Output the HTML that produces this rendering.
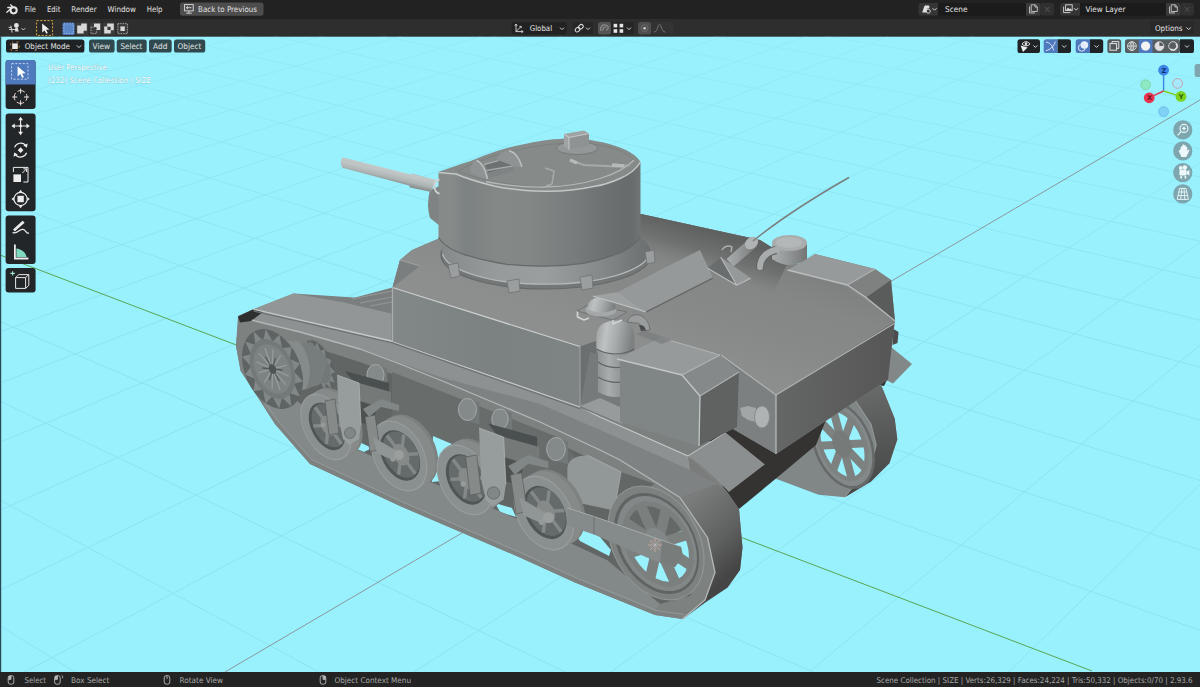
<!DOCTYPE html>
<html><head><meta charset="utf-8"><title>Blender</title>
<style>
html,body{margin:0;padding:0;background:#232323;overflow:hidden}
svg{display:block}
text{font-family:"DejaVu Sans","Liberation Sans",sans-serif;font-size:7.9px;fill:#e2e2e2}
</style></head><body>
<svg width="1200" height="687" viewBox="0 0 1200 687">
<defs><linearGradient id="gFade" x1="0" y1="36" x2="0" y2="296" gradientUnits="userSpaceOnUse"><stop offset="0" stop-color="#99f1fe" stop-opacity="0.55"/><stop offset="1" stop-color="#99f1fe" stop-opacity="0"/></linearGradient><clipPath id="vp"><rect x="0" y="36.5" width="1200" height="635.5"/></clipPath></defs>
<rect x="0" y="0" width="1200" height="687" fill="#232323"/>
<g clip-path="url(#vp)">
<rect x="0" y="36" width="1200" height="637" fill="#99f1fe"/>
<path d="M-12092.6 17930.6 L-1910.5 61.6 M-6956.8 14417.3 L-1810.1 48.7 M-4114.1 16602.4 L-1714.6 36.5 M-676.3 13513.8 L-1623.6 24.8 M2890.3 15436.4 L-1536.7 13.6 M4967.2 12701.9 L-1453.7 2.9 M9088.8 14404.6 L-1374.4 -7.3 M14493.3 16637.3 L-1298.5 -17.0 M10772.1 10208.6 L-1225.8 -26.4 M7507.5 6161.1 L-1156.0 -35.4 M6038.3 4339.7 L-1089.1 -44.0 M5202.9 3304.0 L-1024.8 -52.2 M4664.0 2635.8 L-963.0 -60.2 M4287.4 2168.9 L-903.5 -67.8 M3795.9 1559.6 L-791.2 -82.3 M3626.7 1349.8 L-738.0 -89.1 M3489.3 1179.4 L-686.7 -95.7 M3375.5 1038.3 L-637.2 -102.0 M3279.7 919.6 L-589.4 -108.2 M3198.0 818.2 L-543.2 -114.1 M3127.4 730.7 L-498.6 -119.9 M3065.9 654.4 L-455.3 -125.4 M3011.7 587.3 L-413.5 -130.8 M2963.7 527.8 L-373.0 -136.0 M2920.9 474.7 L-333.7 -141.1 M2882.4 426.9 L-295.6 -146.0 M2847.6 383.9 L-258.7 -150.7 M2816.1 344.7 L-222.8 -155.3 M2787.3 309.1 L-188.0 -159.8 M2761.0 276.5 L-154.2 -164.1 M2736.8 246.5 L-121.4 -168.4 M2714.5 218.8 L-89.4 -172.5 M2693.9 193.2 L-58.4 -176.5 M2674.7 169.5 L-28.2 -180.3 M2656.9 147.5 L1.2 -184.1 M2640.3 126.9 L29.8 -187.8 M2624.8 107.7 L57.7 -191.4 M2610.3 89.6 L84.8 -194.9 M2596.7 72.7 L111.3 -198.3 M2583.8 56.8 L137.1 -201.6 M2571.7 41.8 L162.2 -204.8 M2560.3 27.7 L186.8 -208.0 M2549.5 14.3 L210.7 -211.1 M2539.3 1.6 L234.1 -214.1 M2529.6 -10.4 L256.9 -217.0 M2520.4 -21.8 L279.2 -219.9 M2511.7 -32.6 L301.0 -222.7 M2503.4 -42.9 L322.3 -225.4 M2495.4 -52.8 L343.1 -228.1 M2487.9 -62.2 L363.4 -230.7 M2480.6 -71.1 L383.3 -233.2 M2473.7 -79.7 L402.7 -235.8 M2467.1 -87.9 L421.7 -238.2 M12592.8 12465.8 L2460.8 -95.8 M10533.2 13072.7 L2388.5 -100.9 M8287.2 13734.5 L2318.8 -105.9 M5828.3 14459.1 L2251.4 -110.8 M3124.7 15255.8 L2186.3 -115.4 M138.0 16135.9 L2123.3 -120.0 M-3178.8 17113.2 L2062.3 -124.3 M-3975.8 12206.2 L2003.3 -128.6 M-6627.0 12774.9 L1946.1 -132.7 M-9506.8 13392.6 L1890.7 -136.6 M-6398.4 7937.6 L1837.0 -140.5 M-5052.8 5576.1 L1784.8 -144.2 M-4301.7 4258.0 L1734.2 -147.8 M-3822.4 3416.9 L1685.1 -151.4 M-3245.9 2405.2 L1591.0 -158.1 M-3059.0 2077.3 L1545.9 -161.3 M-2911.4 1818.2 L1502.1 -164.5 M-2791.8 1608.4 L1459.4 -167.5 M-2693.0 1435.0 L1417.9 -170.5 M-2610.0 1289.2 L1377.5 -173.4 M-2539.2 1165.0 L1338.1 -176.2 M-2478.2 1057.9 L1299.7 -179.0 M-2425.0 964.6 L1262.3 -181.7 M-2378.3 882.6 L1225.8 -184.3 M-2336.9 810.0 L1190.3 -186.8 M-2300.0 745.2 L1155.6 -189.3 M-2266.8 687.0 L1121.7 -191.7 M-2236.9 634.5 L1088.7 -194.1 M-2209.8 586.9 L1056.4 -196.4 M-2185.0 543.5 L1024.9 -198.7 M-2162.4 503.8 L994.1 -200.9 M-2141.6 467.3 L964.0 -203.1 M-2122.5 433.7 L934.6 -205.2 M-2104.8 402.6 L905.8 -207.2 M-2088.4 373.8 L877.7 -209.2 M-2073.1 347.0 L850.1 -211.2 M-2058.8 322.0 L823.2 -213.1 M-2045.5 298.7 L796.9 -215.0 M-2033.1 276.8 L771.1 -216.9 M-2021.4 256.3 L745.8 -218.7 M-2010.4 237.0 L721.1 -220.5 M-2000.0 218.8 L696.8 -222.2 M-1990.3 201.7 L673.1 -223.9 M-1981.0 185.5 L649.8 -225.6 M-1972.3 170.1 L627.0 -227.2 M-1964.0 155.6 L604.6 -228.8 M-1956.1 141.7 L582.7 -230.4 M-1948.6 128.6 L561.2 -231.9 M-1941.5 116.1 L540.1 -233.4 M-1934.7 104.2 L519.4 -234.9 M-1928.2 92.8 L499.1 -236.4 M-1922.0 82.0 L479.1 -237.8 M-1916.1 71.6 L459.6 -239.2" stroke="#8be4f2" stroke-width="1" fill="none"/>
<rect x="0" y="36" width="1200" height="260" fill="url(#gFade)"/>
<path d="M0 255 L1092 671" stroke="#58a552" stroke-width="1" fill="none"/>
<path d="M1200 100 L225 672" stroke="#8a9296" stroke-width="0.95" fill="none"/>
<defs>
<linearGradient id="gTur" x1="438" y1="0" x2="641" y2="0" gradientUnits="userSpaceOnUse">
<stop offset="0" stop-color="#858a89"/><stop offset="0.06" stop-color="#878c8b"/><stop offset="0.14" stop-color="#7c8281"/><stop offset="0.3" stop-color="#848988"/><stop offset="0.45" stop-color="#838786"/><stop offset="0.65" stop-color="#7a7d7d"/><stop offset="0.85" stop-color="#6c6f6f"/><stop offset="0.95" stop-color="#686b6b"/><stop offset="1" stop-color="#727575"/></linearGradient>
<linearGradient id="gRing" x1="442" y1="0" x2="650" y2="0" gradientUnits="userSpaceOnUse">
<stop offset="0" stop-color="#868a8a"/><stop offset="0.25" stop-color="#969a9a"/><stop offset="0.5" stop-color="#9a9e9e"/><stop offset="0.75" stop-color="#878a8a"/><stop offset="1" stop-color="#6c6f6f"/></linearGradient>
<linearGradient id="gRoof" x1="700" y1="233" x2="662" y2="352" gradientUnits="userSpaceOnUse">
<stop offset="0" stop-color="#7e8080"/><stop offset="0.3" stop-color="#858787"/><stop offset="0.6" stop-color="#878989"/><stop offset="1" stop-color="#8c8f8e"/></linearGradient>
<linearGradient id="gRoofSh" x1="700" y1="229" x2="688" y2="268" gradientUnits="userSpaceOnUse">
<stop offset="0" stop-color="#5f6161" stop-opacity="1"/><stop offset="0.5" stop-color="#676969" stop-opacity="0.7"/><stop offset="1" stop-color="#747676" stop-opacity="0"/></linearGradient>
<linearGradient id="gSide" x1="392" y1="0" x2="580" y2="0" gradientUnits="userSpaceOnUse">
<stop offset="0" stop-color="#828887"/><stop offset="0.5" stop-color="#7b8281"/><stop offset="1" stop-color="#7e8483"/></linearGradient>
<linearGradient id="gDeck" x1="760" y1="270" x2="800" y2="400" gradientUnits="userSpaceOnUse">
<stop offset="0" stop-color="#8a8c8c"/><stop offset="0.5" stop-color="#939595"/><stop offset="1" stop-color="#8b8d8d"/></linearGradient>
<linearGradient id="gRear" x1="776" y1="0" x2="895" y2="0" gradientUnits="userSpaceOnUse">
<stop offset="0" stop-color="#656666"/><stop offset="1" stop-color="#565656"/></linearGradient>
<linearGradient id="gGun" x1="390" y1="168" x2="387" y2="181" gradientUnits="userSpaceOnUse">
<stop offset="0" stop-color="#b5baba"/><stop offset="0.3" stop-color="#c0c5c5"/><stop offset="0.7" stop-color="#aeb3b3"/><stop offset="1" stop-color="#8b9090"/></linearGradient>
<linearGradient id="gTread" x1="690" y1="500" x2="745" y2="560" gradientUnits="userSpaceOnUse">
<stop offset="0" stop-color="#7a7c7c"/><stop offset="0.6" stop-color="#5f6060"/><stop offset="1" stop-color="#454545"/></linearGradient>
<linearGradient id="gCyl" x1="0" y1="0" x2="1" y2="0">
<stop offset="0" stop-color="#a9acac"/><stop offset="0.35" stop-color="#9a9d9d"/><stop offset="1" stop-color="#747676"/></linearGradient>
<linearGradient id="gTreadF" x1="860" y1="390" x2="880" y2="490" gradientUnits="userSpaceOnUse">
<stop offset="0" stop-color="#686a6a"/><stop offset="0.5" stop-color="#565757"/><stop offset="1" stop-color="#474747"/></linearGradient>
<linearGradient id="gCap" x1="0" y1="0" x2="1" y2="0.15">
<stop offset="0" stop-color="#9a9e9e"/><stop offset="0.3" stop-color="#bec2c2"/><stop offset="0.6" stop-color="#a6aaaa"/><stop offset="1" stop-color="#7c8080"/></linearGradient>
<linearGradient id="gCyl2" x1="0" y1="0" x2="1" y2="0">
<stop offset="0" stop-color="#8f9393"/><stop offset="0.3" stop-color="#a9adad"/><stop offset="0.65" stop-color="#909494"/><stop offset="1" stop-color="#6c7070"/></linearGradient>
</defs>
<g id="tank" stroke-linejoin="round">
<path d="M850 378 L881.5 386 L894.7 418.6 L897.3 439.6 L889.4 463.2 L871 481.5 L844.8 497.3 L818.6 494.7 L776.7 478.9 L760 470 L790 420 Z" fill="#818786"/>
<path d="M850 378 L881.5 386 L894.7 418.6 L897.3 439.6 L889.4 463.2 L871 481.5 L844.8 497.3 L855.3 484 L871 465.8 L876.3 444.8 L871 423.9 L855.3 400.3 L846 390 Z" fill="url(#gTreadF)"/>
<path d="M846 390 L855.3 400.3 L871 423.9 L876.3 444.8 L871 465.8 L855.3 484 L844.8 497.3" fill="none" stroke="#9ea5a4" stroke-width="0.8"/>
<ellipse cx="843.0" cy="445.0" rx="29.0" ry="46.0" fill="#656a69" transform="rotate(-22.0 843.0 445.0)" />
<ellipse cx="843.0" cy="445.0" rx="26.5" ry="43.0" fill="#838888" transform="rotate(-22.0 843.0 445.0)" />
<ellipse cx="842.5" cy="444.5" rx="21.5" ry="36.0" fill="#99f1fe" transform="rotate(-22.0 842.5 444.5)" />
<ellipse cx="842.5" cy="444.5" rx="21.5" ry="36.0" fill="none" transform="rotate(-22.0 842.5 444.5)" stroke="#7d8281" stroke-width="4"/>
<path d="M846.9 444.2 L865.8 443.2 M847.0 449.2 L865.9 469.0 M844.4 451.4 L852.2 480.5 M840.7 449.5 L832.9 470.9 M838.1 444.8 L819.2 445.8 M838.0 439.8 L819.1 420.0 M840.6 437.6 L832.8 408.5 M844.3 439.5 L852.1 418.1" stroke="#7d8281" stroke-width="8.0" fill="none"/>
<ellipse cx="842.0" cy="444.0" rx="9.0" ry="14.0" fill="#767b7a" transform="rotate(-22.0 842.0 444.0)" />
<path d="M891 347 L912 364 L893 383.5 L884 379 Z" fill="#828887"/>
<path d="M700 440 L730 426 L776 453 L888 378 L884 386 L850 380 L826 420 L816 445 L779 476 L739 509 L717 484 Z" fill="#343332"/>
<path d="M238 316 L253.4 309.3 L293.6 293.4 L392 300 L580 380 L712 442 L723 487 L727.5 492.5 L739 509 L742.5 547.5 L740 570 L727.5 587.5 L705 602.5 L682.5 619 L655 615 L575 582.5 L520 557.5 L400 506 L310 464 L275 424 L253.5 390.5 L240.7 371 L236 346 Z" fill="#7c8180"/>
<path d="M238 323.5 L251.8 320.2 L300 332 L360 349 L400 364 L440 380 L540 422 L600 450 L620 460 L680 497.5 L707.5 537.5 L715 572.5 L705 600 L682.5 619 L655 615 L575 582.5 L520 557.5 L400 506 L310 464 L275 424 L253.5 390.5 L240.7 371 L236 346 Z" fill="#7d8281"/>
<path d="M600 417 L688 456 L717 484 L727.5 492.5 L739 509 L742.5 547.5 L740 570 L727.5 587.5 L705 602.5 L682.5 619 L705 600 L715 572.5 L707.5 537.5 L680 497.5 L620 460 L600 450 Z" fill="url(#gTread)"/>
<path d="M250 340 L300 343 L360 362 L400 377 L440 392 L540 435 L600 463 L640 482 L690 520 L700 560 L690 596 L660 604 L607 562 L520 524 L431 484 L358 452 L300 404 L262 372 Z" fill="#616665"/>
<path d="M392 372 L560 438 L585 470 L560 500 L470 462 L392 420 Z" fill="#686d6c"/>
<path d="M346 436 L372 448 L364 452 L350 446 Z M433 436 L452 444 L452 480 L432 482 Z M495 503 L512 508 L516 517 L500 512 Z M572 521 L597.5 534 L611 550 L609 556 L580 541 L571 528 Z" fill="#99f1fe"/>
<path d="M296 400 L358 450 L431 482 L520 520 L607 560 L660 604 L655 611 L575 578 L520 553 L400 501.5 L312 460 L262 404 Z" fill="#838888"/>
<path d="M253 391 L275 424 L310 464 L400 506 L520 557.5 L575 582.5 L655 615 L682.5 619" fill="none" stroke="#999f9e" stroke-width="0.8" transform="translate(1.5,-4.5)"/>
<ellipse cx="319.0" cy="365.5" rx="13.5" ry="27.0" fill="#5e6363" transform="rotate(-24.0 319.0 365.5)" />
<path d="M331.3 360.0 L329.5 365.9 L335.0 372.1 L330.9 374.3 L335.0 382.7 L329.5 380.7 L331.4 389.3 L325.8 383.6 L324.9 390.5 L320.5 382.4 L317.1 386.0 L314.8 377.3 L309.7 376.7 L310.1 369.5 L304.4 364.9 L307.5 360.7 L302.5 353.3 L307.4 353.1 L304.4 344.4 L310.1 348.3 L309.6 340.4 L314.8 347.5 L317.0 342.1 L320.4 350.8 L324.8 349.2 L325.7 357.4 Z" fill="#7d8483"/>
<ellipse cx="319.0" cy="365.5" rx="9.5" ry="19.0" fill="#727877" transform="rotate(-24.0 319.0 365.5)" />
<path d="M280 340 L312 343 L327 362 L320 384 L294 393 L270 384 Z" fill="#858b8a"/>
<path d="M300 342 L312 343 L327 362 L320 384 L306 389 Q316 366 300 342 Z" fill="#777d7c"/>
<ellipse cx="272.5" cy="369.0" rx="27.6" ry="42.0" fill="#5e6363" transform="rotate(-24.0 272.5 369.0)" />
<path d="M300.0 363.6 L293.9 371.6 L303.0 381.4 L293.9 383.8 L299.9 396.6 L289.6 393.0 L291.4 406.4 L281.9 397.5 L279.2 408.8 L272.4 396.4 L265.6 403.3 L262.9 389.8 L253.4 391.0 L255.3 379.1 L245.0 374.4 L251.1 366.4 L242.0 356.6 L251.1 354.2 L245.1 341.4 L255.4 345.0 L253.6 331.6 L263.1 340.5 L265.8 329.2 L272.6 341.6 L279.4 334.7 L282.1 348.2 L291.6 347.0 L289.7 358.9 Z" fill="#828888"/>
<ellipse cx="272.5" cy="369.0" rx="20.7" ry="31.5" fill="#737978" transform="rotate(-24.0 272.5 369.0)" />
<ellipse cx="272.5" cy="369.0" rx="17.0" ry="26.0" fill="#7d8382" transform="rotate(-24.0 272.5 369.0)" />
<path d="M275.8 368.1 L286.5 365.2 M276.3 370.7 L288.5 376.0 M275.7 372.8 L286.1 385.0 M274.3 373.9 L280.1 389.7 M272.4 373.7 L272.1 388.8 M270.5 372.2 L264.2 382.7 M269.2 369.9 L258.5 372.8 M268.7 367.3 L256.5 362.0 M269.3 365.2 L258.9 353.0 M270.7 364.1 L264.9 348.3 M272.6 364.3 L272.9 349.2 M274.5 365.8 L280.8 355.3" stroke="#999f9e" stroke-width="1.1" fill="none"/>
<path d="M274.7 369.2 L282.5 370.0 M274.1 371.7 L279.6 381.3 M271.9 371.4 L269.6 380.2 M270.3 368.8 L262.5 368.0 M270.9 366.3 L265.4 356.7 M273.1 366.6 L275.4 357.8" stroke="#545a59" stroke-width="1.3" fill="none"/>
<ellipse cx="272.5" cy="369.0" rx="3.5" ry="5.0" fill="#4e5455" transform="rotate(-24.0 272.5 369.0)" />
<path d="M567.4 468 Q568 456 587.4 455.2 L621 472 L614.2 510.5 L567.4 500.4 Z" fill="#929897"/>
<path d="M621 472 L654.4 483.7 L634.3 500.4 L614.2 510.5 Z" fill="#636766"/>
<path d="M587.4 455.2 L621 472 L614.2 510.5" fill="none" stroke="#acb3b2" stroke-width="0.8"/>
<clipPath id="cIdl"><ellipse cx="658.0" cy="544.0" rx="29.5" ry="43.0" fill="#fff" transform="rotate(-30.0 658.0 544.0)" /></clipPath>
<ellipse cx="656.0" cy="543.0" rx="43.0" ry="61.0" fill="#7d8281" transform="rotate(-30.0 656.0 543.0)" />
<ellipse cx="656.0" cy="543.0" rx="43.0" ry="61.0" fill="none" transform="rotate(-30.0 656.0 543.0)" stroke="#9ba1a0" stroke-width="0.7"/>
<ellipse cx="656.5" cy="543.5" rx="38.0" ry="54.0" fill="#606564" transform="rotate(-30.0 656.5 543.5)" />
<ellipse cx="657.0" cy="543.5" rx="35.5" ry="51.0" fill="#828887" transform="rotate(-30.0 657.0 543.5)" />
<ellipse cx="658.0" cy="544.0" rx="29.5" ry="43.0" fill="#99f1fe" transform="rotate(-30.0 658.0 544.0)" />
<path d="M600 470 L720 470 L712 514 L690 526 L612 566 L600 560 Z" fill="#646968" clip-path="url(#cIdl)"/>
<ellipse cx="658.0" cy="544.0" rx="29.5" ry="43.0" fill="none" transform="rotate(-30.0 658.0 544.0)" stroke="#7b807f" stroke-width="5"/>
<path d="M662.3 542.6 L687.9 534.5 M662.9 547.2 L692.1 566.3 M660.6 549.9 L676.3 585.0 M656.8 549.1 L649.8 579.7 M653.7 545.4 L628.1 553.5 M653.1 540.8 L623.9 521.7 M655.4 538.1 L639.7 503.0 M659.2 538.9 L666.2 508.3" stroke="#7b807f" stroke-width="10.5" fill="none"/>
<ellipse cx="657.0" cy="544.0" rx="12.0" ry="17.0" fill="#828887" transform="rotate(-30.0 657.0 544.0)" />
<ellipse cx="337.0" cy="421.0" rx="22.0" ry="36.0" fill="#7d8281" transform="rotate(-28.0 337.0 421.0)" />
<ellipse cx="334.2" cy="422.5" rx="22.0" ry="36.0" fill="#868b8a" transform="rotate(-28.0 334.2 422.5)" />
<ellipse cx="331.5" cy="424.0" rx="22.0" ry="36.0" fill="#868b8a" transform="rotate(-28.0 331.5 424.0)" />
<ellipse cx="328.8" cy="425.5" rx="22.0" ry="36.0" fill="#868b8a" transform="rotate(-28.0 328.8 425.5)" />
<ellipse cx="326.0" cy="427.0" rx="22.0" ry="36.0" fill="#969d9c" transform="rotate(-28.0 326.0 427.0)" />
<ellipse cx="326.0" cy="427.0" rx="21.1" ry="34.6" fill="#8a908f" transform="rotate(-28.0 326.0 427.0)" />
<ellipse cx="327.0" cy="426.5" rx="15.6" ry="25.6" fill="#505655" transform="rotate(-28.0 327.0 426.5)" />
<ellipse cx="328.2" cy="425.6" rx="14.3" ry="23.4" fill="#656b6a" transform="rotate(-28.0 328.2 425.6)" />
<path d="M332.0 425.5 L343.2 425.3 M331.6 430.3 L341.4 443.9 M327.8 430.3 L326.4 444.2 M324.4 425.7 L313.2 425.9 M324.8 420.9 L315.0 407.3 M328.6 420.9 L330.0 407.0" stroke="#838989" stroke-width="3.4" fill="none"/>
<ellipse cx="328.0" cy="425.8" rx="6.6" ry="10.8" fill="#868b8a" transform="rotate(-28.0 328.0 425.8)" />
<ellipse cx="410.0" cy="450.0" rx="25.0" ry="38.0" fill="#7d8281" transform="rotate(-28.0 410.0 450.0)" />
<ellipse cx="407.2" cy="451.5" rx="25.0" ry="38.0" fill="#868b8a" transform="rotate(-28.0 407.2 451.5)" />
<ellipse cx="404.5" cy="453.0" rx="25.0" ry="38.0" fill="#868b8a" transform="rotate(-28.0 404.5 453.0)" />
<ellipse cx="401.8" cy="454.5" rx="25.0" ry="38.0" fill="#868b8a" transform="rotate(-28.0 401.8 454.5)" />
<ellipse cx="399.0" cy="456.0" rx="25.0" ry="38.0" fill="#969d9c" transform="rotate(-28.0 399.0 456.0)" />
<ellipse cx="399.0" cy="456.0" rx="24.0" ry="36.5" fill="#8a908f" transform="rotate(-28.0 399.0 456.0)" />
<ellipse cx="400.0" cy="455.5" rx="17.8" ry="27.0" fill="#505655" transform="rotate(-28.0 400.0 455.5)" />
<ellipse cx="401.2" cy="454.6" rx="16.2" ry="24.7" fill="#656b6a" transform="rotate(-28.0 401.2 454.6)" />
<path d="M405.5 454.4 L418.0 453.8 M404.8 459.5 L415.4 473.8 M400.5 459.7 L398.6 474.6 M396.9 454.8 L384.4 455.4 M397.6 449.7 L387.0 435.4 M401.9 449.5 L403.8 434.6" stroke="#838989" stroke-width="3.4" fill="none"/>
<ellipse cx="401.0" cy="454.8" rx="7.5" ry="11.4" fill="#868b8a" transform="rotate(-28.0 401.0 454.8)" />
<ellipse cx="476.0" cy="474.0" rx="25.0" ry="38.0" fill="#7d8281" transform="rotate(-28.0 476.0 474.0)" />
<ellipse cx="473.2" cy="475.5" rx="25.0" ry="38.0" fill="#868b8a" transform="rotate(-28.0 473.2 475.5)" />
<ellipse cx="470.5" cy="477.0" rx="25.0" ry="38.0" fill="#868b8a" transform="rotate(-28.0 470.5 477.0)" />
<ellipse cx="467.8" cy="478.5" rx="25.0" ry="38.0" fill="#868b8a" transform="rotate(-28.0 467.8 478.5)" />
<ellipse cx="465.0" cy="480.0" rx="25.0" ry="38.0" fill="#969d9c" transform="rotate(-28.0 465.0 480.0)" />
<ellipse cx="465.0" cy="480.0" rx="24.0" ry="36.5" fill="#8a908f" transform="rotate(-28.0 465.0 480.0)" />
<ellipse cx="466.0" cy="479.5" rx="17.8" ry="27.0" fill="#505655" transform="rotate(-28.0 466.0 479.5)" />
<ellipse cx="467.2" cy="478.6" rx="16.2" ry="24.7" fill="#656b6a" transform="rotate(-28.0 467.2 478.6)" />
<path d="M471.5 478.4 L484.0 477.8 M470.8 483.5 L481.4 497.8 M466.5 483.7 L464.6 498.6 M462.9 478.8 L450.4 479.4 M463.6 473.7 L453.0 459.4 M467.9 473.5 L469.8 458.6" stroke="#838989" stroke-width="3.4" fill="none"/>
<ellipse cx="467.0" cy="478.8" rx="7.5" ry="11.4" fill="#868b8a" transform="rotate(-28.0 467.0 478.8)" />
<ellipse cx="555.0" cy="507.0" rx="27.0" ry="40.0" fill="#7d8281" transform="rotate(-28.0 555.0 507.0)" />
<ellipse cx="552.2" cy="508.5" rx="27.0" ry="40.0" fill="#868b8a" transform="rotate(-28.0 552.2 508.5)" />
<ellipse cx="549.5" cy="510.0" rx="27.0" ry="40.0" fill="#868b8a" transform="rotate(-28.0 549.5 510.0)" />
<ellipse cx="546.8" cy="511.5" rx="27.0" ry="40.0" fill="#868b8a" transform="rotate(-28.0 546.8 511.5)" />
<ellipse cx="544.0" cy="513.0" rx="27.0" ry="40.0" fill="#969d9c" transform="rotate(-28.0 544.0 513.0)" />
<ellipse cx="544.0" cy="513.0" rx="25.9" ry="38.4" fill="#8a908f" transform="rotate(-28.0 544.0 513.0)" />
<ellipse cx="545.0" cy="512.5" rx="19.2" ry="28.4" fill="#505655" transform="rotate(-28.0 545.0 512.5)" />
<ellipse cx="546.2" cy="511.6" rx="17.6" ry="26.0" fill="#656b6a" transform="rotate(-28.0 546.2 511.6)" />
<path d="M550.8 511.3 L564.2 510.5 M550.0 516.7 L561.2 531.7 M545.4 517.0 L543.2 532.8 M541.6 511.9 L528.2 512.7 M542.4 506.5 L531.2 491.5 M547.0 506.2 L549.2 490.4" stroke="#838989" stroke-width="3.4" fill="none"/>
<ellipse cx="546.0" cy="511.8" rx="8.1" ry="12.0" fill="#868b8a" transform="rotate(-28.0 546.0 511.8)" />
<path d="M567.4 508 L594 516.5 L660 539 L681 547 L683 556 L675 567 L655 561 L594 534.5 L567.4 525.5 Z" fill="#858a8a"/>
<path d="M567.4 508 L594 516.5 L681 547" fill="none" stroke="#adb5b3" stroke-width="0.8"/>
<path d="M594 516.5 L594 534.5" fill="none" stroke="#686d6c" stroke-width="0.8"/>
<path d="M662 541 L681 547 L683 556 L675 567 L660 563 Z" fill="#787d7c"/>
<circle cx="655" cy="545" r="5" fill="none" stroke="#c98c7c" stroke-width="0.7"/><path d="M655 538 V552 M648 545 H662 M650 540 L660 550 M660 540 L650 550" stroke="#c9c7c2" stroke-width="0.5"/>
<path d="M375.5 364.5 l12 4 l0 21.0 l-12 -4 Z" fill="#727777"/>
<ellipse cx="375.5" cy="375.0" rx="8.6" ry="10.5" fill="#848989" stroke="#a8afae" stroke-width="0.9"/>
<path d="M467.4 398.5 l12 4 l0 22.0 l-12 -4 Z" fill="#727777"/>
<ellipse cx="467.4" cy="409.5" rx="9.0" ry="11.0" fill="#848989" stroke="#a8afae" stroke-width="0.9"/>
<path d="M500.0 409.0 l12 4 l0 20.0 l-12 -4 Z" fill="#727777"/>
<ellipse cx="500.0" cy="419.0" rx="8.2" ry="10.0" fill="#848989" stroke="#a8afae" stroke-width="0.9"/>
<path d="M556.0 437.5 l12 4 l0 23.0 l-12 -4 Z" fill="#727777"/>
<ellipse cx="556.0" cy="449.0" rx="9.4" ry="11.5" fill="#848989" stroke="#a8afae" stroke-width="0.9"/>
<path d="M345.0 371.0 L389.0 383.0 L389.0 395.0 L359.0 389.0 Z" fill="#4a4f4f"/>
<path d="M359.0 383.0 L391.0 392.0 L391.0 409.0 L360.0 401.0 Z" fill="#757a79"/>
<path d="M359.0 401.0 L377.0 407.0 L373.0 425.0 L361.0 423.0 Z" fill="#4d5251"/>
<path d="M337.0 375.0 L359.0 383.0 L361.0 425.0 L359.0 439.0 L349.0 445.0 L343.0 439.0 L339.0 421.0 Z" fill="#969d9c"/>
<path d="M337.0 375.0 L359.0 383.0 L361.0 425.0" fill="none" stroke="#b6bdbc" stroke-width="0.7"/>
<circle cx="350.0" cy="433.0" r="5.5" fill="#818786" stroke="#636867" stroke-width="0.8"/>
<path d="M325.0 401.0 L335.0 399.0 L339.0 433.0 L329.0 435.0 Z" fill="#868b8a"/>
<path d="M325.0 401.0 L335.0 399.0 L339.0 433.0 L329.0 435.0 Z" fill="none" stroke="#575b5b" stroke-width="0.7"/>
<path d="M365.0 417.0 L375.0 415.0 L380.0 449.0 L370.0 452.0 Z" fill="#868b8a"/>
<path d="M365.0 417.0 L375.0 415.0 L380.0 449.0 L370.0 452.0 Z" fill="none" stroke="#575b5b" stroke-width="0.7"/>
<path d="M363.0 409.0 L381.0 399.0 L399.0 405.0 L399.0 411.0 L381.0 407.0 L369.0 417.0 Z" fill="#818786"/>
<path d="M373.0 437.0 L397.0 451.0 L395.0 461.0 L377.0 453.0 Z" fill="#909695"/>
<circle cx="399.0" cy="455.0" r="5.0" fill="#9a9f9e"/>
<circle cx="393.0" cy="459.0" r="2.6" fill="#959b9a"/>
<circle cx="323.0" cy="425.0" r="2.4" fill="#959b9a"/>
<path d="M488.0 423.5 L537.2 437.0 L537.2 450.4 L503.6 443.7 Z" fill="#4a4f4f"/>
<path d="M503.6 437.0 L539.5 447.0 L539.5 466.1 L504.8 457.1 Z" fill="#757a79"/>
<path d="M503.6 457.1 L523.8 463.8 L519.3 484.0 L505.9 481.8 Z" fill="#4d5251"/>
<path d="M479.0 428.0 L503.6 437.0 L505.9 484.0 L503.6 499.7 L492.4 506.4 L485.7 499.7 L481.2 479.5 Z" fill="#969d9c"/>
<path d="M479.0 428.0 L503.6 437.0 L505.9 484.0" fill="none" stroke="#b6bdbc" stroke-width="0.7"/>
<circle cx="493.6" cy="493.0" r="6.2" fill="#818786" stroke="#636867" stroke-width="0.8"/>
<path d="M465.6 457.1 L476.8 454.9 L481.2 493.0 L470.0 495.2 Z" fill="#868b8a"/>
<path d="M465.6 457.1 L476.8 454.9 L481.2 493.0 L470.0 495.2 Z" fill="none" stroke="#575b5b" stroke-width="0.7"/>
<path d="M510.4 475.0 L521.6 472.8 L527.2 510.9 L516.0 514.2 Z" fill="#868b8a"/>
<path d="M510.4 475.0 L521.6 472.8 L527.2 510.9 L516.0 514.2 Z" fill="none" stroke="#575b5b" stroke-width="0.7"/>
<path d="M508.1 466.1 L528.3 454.9 L548.4 461.6 L548.4 468.3 L528.3 463.8 L514.8 475.0 Z" fill="#818786"/>
<path d="M519.3 497.4 L546.2 513.1 L544.0 524.3 L523.8 515.4 Z" fill="#909695"/>
<circle cx="548.4" cy="517.6" r="5.6" fill="#9a9f9e"/>
<circle cx="541.7" cy="522.1" r="2.9" fill="#959b9a"/>
<circle cx="463.3" cy="484.0" r="2.7" fill="#959b9a"/><!-- ===== fender ===== -->
<path d="M440 377 L540 404 L600 430 L690 470 L717 484 L680 497.5 L620 460 L600 450 L540 422 L440 380 Z" fill="#7f8282"/>
<path d="M342 301 L392.5 287.5 L392.5 316 Z" fill="#7b7e7e"/>
<path d="M352 299 L392 291 M360 303 L392 297 M370 306 L392 302" stroke="#9a9d9d" stroke-width="0.8" fill="none"/>
<path d="M253.4 309.3 L391.5 341 L580 407 L600 417 L688 456 L690 470 L600 430 L540 404 L440 377 L400 363 L360 349 L300 332 L251.8 320.2 Z" fill="#8e9191"/>
<path d="M253.4 309.3 L293.6 293.4 L343.8 302.6 L391.5 313.5 L391.5 341 Z" fill="#939696"/>
<path d="M238 316.5 L253.4 309.3 L263 312 L251 321 L240 322.5 Z" fill="#2e2f2f"/>
<path d="M687.9 456 L725.5 432.6 L764.9 464.4 L728.9 492 Q704 466 687.9 456 Z" fill="#8c8f8f"/>
<path d="M687.9 456 L725.5 432.6" stroke="#b9bdbd" stroke-width="1.04" fill="none"/>
<path d="M253.4 311 L391.5 342.6 L580 408.6" fill="none" stroke="#6f7272" stroke-width="1.2"/>
<path d="M253.4 309.3 L391.5 341 L580 407 L600 417 L688 456" fill="none" stroke="#c4c8c8" stroke-width="1.30"/>
<path d="M251.8 320.2 L300 332 L360 349 L400 364 L440 380 L540 422 L600 450 L620 460 L680 497.5 L707.5 537.5 L715 572.5 L705 600 L682.5 619" fill="none" stroke="#b3b7b7" stroke-width="1.30"/>
<!-- ===== hull ===== -->
<path d="M392.5 287.5 L400 260 L412 250 L440 238 L641 214 L760 240 L800 266 L815 254 L875 269 L891 280 L895 321 L888 379.5 L776 454 L730 427 L699 446 L620 422 L580 406 L392.5 341 Z" fill="#858888"/>
<path d="M392.5 287.5 L400 260 L412 250 L440 238 L641 214 L760 240 L800 266 L847 287 L895 321 L776 395 L721 355 L660 337 L617 359 L580 346 Z" fill="url(#gRoof)"/>
<path d="M636 212 L641 214 L760 240 L790 258 L770 300 L620 300 Z" fill="url(#gRoofSh)"/>
<path d="M400 260 L420 266 L392.5 287.5 Z" fill="#7b7e7e"/>
<path d="M400 260 L420 266" stroke="#a5a9a9" stroke-width="0.8" fill="none"/>
<!-- hull side -->
<path d="M392.5 287.5 L580 346.5 L580 406 L392.5 341 Z" fill="url(#gSide)"/>
<path d="M580 346.5 L596 341 L600 400 L580 406 Z" fill="#6c6f6f"/>
<path d="M590 352 L622 360 L622 424 L580 408 Z" fill="#777a7a"/>
<path d="M580 406 L600 398 L622 408 L622 424 Z" fill="#989b9b"/>
<path d="M392.5 287.5 L580 346.5" stroke="#c9cdcd" stroke-width="1.30" fill="none"/>
<path d="M392.5 287.5 L392.5 341" stroke="#a9adad" stroke-width="1.30" fill="none"/>
<path d="M580 346.5 L580 406" stroke="#a4a8a8" stroke-width="0.9" fill="none"/>
<!-- rear lower plate & rear face -->
<path d="M716 352 L776 395 L776 454 L726 425 Z" fill="#7c8080"/>
<path d="M776 395 L894.5 322 L888 379.5 L776 454 Z" fill="url(#gRear)"/>
<path d="M721 355 L776 395 L895 323" stroke="#aeb2b2" stroke-width="1.30" fill="none"/>
<path d="M776 395 L776 454" stroke="#b4b8b8" stroke-width="1.30" fill="none"/>
<path d="M893.5 329 L898.5 332 L897.5 343 L892.5 345 Z" fill="#4c4c4c"/>

<!-- far side box -->
<path d="M787.5 270 L815 254 L875 269 L847.5 285 Z" fill="#979a9a"/>
<path d="M847.5 285 L875 269 L891 280 L866 297.5 Z" fill="#7f8181"/>
<path d="M866 297.5 L891 280 L895 322 Z" fill="#5a5b5b"/>
<path d="M787.5 270 L847.5 285 L866 297.5 L895 321" stroke="#b9bdbd" stroke-width="1.30" fill="none"/>
<path d="M847.5 285 L875 269" stroke="#b0b4b4" stroke-width="1.04" fill="none"/>
<!-- air cleaner cylinder -->
<path d="M598 345 L634 345 L634 392 Q615 402 598 392 Z" fill="url(#gCyl2)"/>
<path d="M598 362 Q612 372 634 364 M598 377 Q612 386 634 380" stroke="#5f6363" stroke-width="1.2" fill="none"/>
<path d="M596.5 337 Q596 321.5 615.5 320.5 Q634.5 321 634.5 337 L634.5 349 Q615 359 596.5 349 Z" fill="url(#gCap)"/>
<path d="M596.5 349 Q615 359 634.5 349" stroke="#5f6363" stroke-width="1.1" fill="none"/>
<!-- near side box -->
<path d="M617 359 L660 337.5 L720 355 L682 375 Z" fill="#979a9a"/>
<path d="M682 375 L720 355 L739 372 L700 396 Z" fill="#868989"/>
<path d="M620 360 L682 375 L700 396 L699 446 L620 422 Z" fill="#7f8685"/>
<path d="M700 396 L739 372 L737 427 L699 446 Z" fill="#606262"/>
<path d="M617 359 L682 375 L700 396 L699 446" stroke="#c2c6c6" stroke-width="1.30" fill="none"/>
<path d="M682 375 L720 355 M700 396 L739 372 M660 337.5 L720 355" stroke="#b0b4b4" stroke-width="1.04" fill="none"/>
<!-- filler cap -->
<path d="M577 311 L590 304 L627 312 L613 320 Z" fill="#8f9393" stroke="#6a6d6d" stroke-width="0.8"/>
<path d="M577.5 311.5 L577.5 317 L584 320 L589 318 M613 320 L613 324 L622 320" stroke="#cfd3d3" stroke-width="1.7" fill="none"/>
<ellipse cx="601" cy="310" rx="15.5" ry="6.6" fill="#a4a8a8"/>
<path d="M587 309 Q588 297.5 601 297 Q615 297.5 616 309 Q601 316 587 309 Z" fill="url(#gCap)"/>
<path d="M627 322 Q630 313 640 315 Q649 319 650 330 L643 331 Q641 322 635 323 Z" fill="#999d9d" stroke="#606363" stroke-width="0.7"/>
<path d="M639 325 Q645 324 646 331 L641 331 Z" fill="#4a4c4c"/>
<path d="M644 330 L672 340 L662 344 L636 334 Z" fill="#797c7c" opacity="0.7"/>
<!-- raised cover -->
<path d="M593 296 L618 292 L646 312 Z" fill="#9ea1a1"/>
<path d="M618 292 L664 268 L700 250 L713 278 L646 312 Z" fill="#969999"/>
<path d="M646 312 L713 278" stroke="#5f6161" stroke-width="1.2" fill="none"/>
<path d="M593 296 L646 312" stroke="#c0c4c4" stroke-width="1.17" fill="none"/>
<!-- antenna mount ramp -->
<path d="M707.6 268.2 L720.6 257.1 L736.7 285.3 Z" fill="#6a6d6d"/>
<path d="M720.6 257.1 L750.8 278.2 L736.7 285.3 Z" fill="#969999"/>
<path d="M707.6 268.2 L736.7 285.3 L750.8 278.2 M720.6 257.1 L736.7 285.3" stroke="#b9bdbd" stroke-width="1.04" fill="none"/>
<path d="M722 250 Q726 244 732 247 L731 252" stroke="#aaaeae" stroke-width="1.4" fill="none"/>
<!-- antenna base & antenna -->
<path d="M726.5 259 L749 239 L757 246.5 L733.5 266.5 Z" fill="url(#gCyl)"/>
<ellipse cx="751.5" cy="243" rx="7.2" ry="5.6" fill="#b0b3b3" transform="rotate(-40 751.5 243)"/>
<path d="M753 241 Q790 211 849 177.5" stroke="#7b7e7e" stroke-width="1.5" fill="none"/>
<!-- muffler -->
<path d="M772 244 L807 244 L807 259 Q790 271 772 259 Z" fill="url(#gCyl)"/>
<ellipse cx="789.5" cy="243" rx="17.5" ry="8" fill="#a9acac"/>
<ellipse cx="789" cy="242.4" rx="13" ry="5.4" fill="#b4b7b7"/>
<path d="M760 268 Q760 254 776 250" stroke="#5f6262" stroke-width="8" fill="none"/>
<path d="M760 267 Q760.5 253.5 777 249.5" stroke="#a9acac" stroke-width="6" fill="none" stroke-linecap="round"/>
<!-- tail light -->
<path d="M740 408 L748 406 L756 408 L756 422 L748 420 L742 416 Z" fill="#a3a6a6"/>
<ellipse cx="762" cy="417" rx="7.5" ry="11" fill="#b0b3b3" stroke="#8a8d8d" stroke-width="1"/>
<!-- ===== turret ===== -->
<ellipse cx="546" cy="255" rx="105" ry="34" fill="#747777"/>
<ellipse cx="546" cy="255" rx="105" ry="34" fill="none" stroke="#666969" stroke-width="1.2"/>
<ellipse cx="546" cy="251" rx="104" ry="33.5" fill="url(#gRing)"/>
<path d="M442.5 254 A104 33.5 0 0 0 649.5 254" fill="none" stroke="#b3b7b7" stroke-width="1.30"/>
<!-- mantlet behind -->
<path d="M430 190 Q426 205 430 218 L440 226 L440 186 Z" fill="#808383"/>
<path id="turSide" d="M438.5 172 L438.5 237.5 C444 246 455 252 468 255.7 C481 259.5 494 262.5 507 264.3 C520 265.8 533 266.3 545 266.2 C558 265.9 571 264.9 583 263.3 C597 260.8 610 257 622 251.8 C631 247.5 637 242.5 640.5 236.5 L640.5 162 Z" fill="url(#gTur)"/>
<path d="M438.5 237.5 C444 246 455 252 468 255.7 C481 259.5 494 262.5 507 264.3 C520 265.8 533 266.3 545 266.2 C558 265.9 571 264.9 583 263.3 C597 260.8 610 257 622 251.8 C631 247.5 637 242.5 640.5 236.5" fill="none" stroke="#666969" stroke-width="1.3"/>
<path d="M438.5 172 C450 168 460 164 470 161.25 C490 153 505 148 520 145 C540 140.5 555 138.5 572 138.5 C590 139 604 142 620 147.5 C630 151.5 637 156 640.5 162 C636 170 628 175 620 178.5 C610 183 600 185.5 595 186.25 C575 190.5 560 191.5 545 191.25 C525 191 508 189 495 186.25 C478 182 465 178 456 174 Z" fill="#868a89"/>
<path d="M438.5 172.5 L456 174 C465 178 478 182 495 186.25 C508 189 525 191 545 191.25 C560 191.5 575 190.5 595 186.25 C600 185.5 610 183 620 178.5 C628 175 636 170 640.5 162" fill="none" stroke="#c3c7c7" stroke-width="1.43"/>
<path d="M458 171 C490 153 540 143 575 143 C600 143.5 625 149 634 160 C620 175 585 186 545 187 C510 186 478 180 458 171 Z" fill="none" stroke="#7c7f7f" stroke-width="0.9"/>
<path d="M486 181.5 C505 185.5 525 187.3 545 187 C585 186 620 175 634 160" fill="none" stroke="#b4b8b8" stroke-width="1.30"/>
<!-- top details -->
<ellipse cx="577" cy="148" rx="20.5" ry="6.5" fill="#959898" stroke="#767979" stroke-width="1"/>
<path d="M564 134 L584 130.5 L589 133.5 L589 146 L569 149.5 L564 146.5 Z" fill="#a0a3a3"/>
<path d="M569 137.5 L589 133.5 L589 146 L569 149.5 Z" fill="#8f9292"/>
<path d="M564 134 L569 137.5 L589 133.5 M569 137.5 L569 149.5" stroke="#c3c7c7" stroke-width="1.04" fill="none"/>
<path d="M496.5 158.5 Q500 151.5 509 150.5 Q518 153 522 167 L514 166 L500 161.5 Z" fill="#8f9393"/>
<path d="M509 150.5 Q518 153 522 167" fill="none" stroke="#bcc0c0" stroke-width="1.4"/>
<path d="M485 164 L499 160.5 L513 166 L488 173 Z" fill="#6d7171"/>
<path d="M484 164.5 L498.5 160.7 M486.5 170.5 L513 166" stroke="#a4a8a8" stroke-width="1.3" fill="none"/>
<path d="M487 173 L513.5 166.5 L514 171 L488 178.5 Z" fill="#7f8383"/>
<path d="M470 172 Q470.5 162 476.5 160.5 Q484 163 487.5 179 L479 177 Z" fill="#8f9393"/>
<path d="M476.5 160.5 Q484 163 487.5 179" fill="none" stroke="#bcc0c0" stroke-width="1.4"/>
<path d="M570 160 L584 165 L616 166.5 L630 165" stroke="#a7aaaa" stroke-width="2.2" fill="none"/>
<path d="M570 160 L577 163 M612 165 L624 166" stroke="#b6baba" stroke-width="3.4" fill="none"/>
<path d="M545 168 L554 171 L552 184 L546 186" stroke="#a7aaaa" stroke-width="1.6" fill="none"/>
<!-- ring lugs -->
<g fill="#9b9e9e" stroke="#6f7272" stroke-width="0.8"><path d="M448 265 L458 263 L460 276 L451 278 Z"/><path d="M507 281 L519 279 L520 291 L509 293 Z"/><path d="M580 277 L592 275 L593 288 L582 290 Z"/><path d="M645 252 L654 250 L655 262 L647 264 Z"/></g>
<!-- ===== gun ===== -->
<path d="M343.5 157.6 Q338.5 161.5 342.5 167.8 L409 185.5 L410 187.5 L431 192 L436 180 L412 173.5 L411 175 Z" fill="url(#gGun)"/>
<path d="M341.5 158 L411 175 L436 180.5" stroke="#c9cdcd" stroke-width="1.04" fill="none"/>
<path d="M439.5 179.5 A5 7 0 0 0 439.5 193.5" fill="none" stroke="#cfd3d3" stroke-width="1.9"/>
</g>

</g>
<!-- viewport header -->
<rect x="6" y="39.6" width="78.4" height="13" rx="2.6" fill="#1f2224"/>
<rect x="10.8" y="42" width="8.4" height="8.4" rx="1.2" fill="none" stroke="#d98f3a" stroke-width="0.8" stroke-dasharray="2.4 3.2" stroke-dashoffset="1.2"/>
<rect x="12.2" y="43.4" width="5.6" height="5.6" fill="#ececec"/>
<text x="24.7" y="49.2" textLength="45.3" lengthAdjust="spacingAndGlyphs">Object Mode</text>
<path d="M76.8 45.4 L79 47.6 L81.2 45.4" fill="none" stroke="#d6d6d6" stroke-width="1"/>
<g fill="#30494f">
<rect x="89" y="39.6" width="25.6" height="13" rx="2.6"/>
<rect x="116.7" y="39.6" width="30" height="13" rx="2.6"/>
<rect x="149" y="39.6" width="22.7" height="13" rx="2.6"/>
<rect x="174" y="39.6" width="31.2" height="13" rx="2.6"/>
</g>
<text x="92.6" y="49.2" textLength="17.6" lengthAdjust="spacingAndGlyphs">View</text>
<text x="120.6" y="49.2" textLength="21.8" lengthAdjust="spacingAndGlyphs">Select</text>
<text x="153" y="49.2" textLength="14.4" lengthAdjust="spacingAndGlyphs">Add</text>
<text x="177.6" y="49.2" textLength="23.8" lengthAdjust="spacingAndGlyphs">Object</text>
<!-- viewport text -->
<g style="paint-order:stroke" stroke="#5f9fab" stroke-width="0.8" stroke-opacity="0.4">
<text x="48" y="69.8" textLength="59" lengthAdjust="spacingAndGlyphs" style="fill:#ffffff">User Perspective</text>
<text x="48" y="83" textLength="103" lengthAdjust="spacingAndGlyphs" style="fill:#ffffff">(232) Scene Collection | SIZE</text>
</g>
<!-- left toolbar -->
<rect x="5.6" y="60" width="30" height="49" rx="3" fill="#232628"/>
<path d="M8.6 60 H32.6 Q35.6 60 35.6 63 V84.5 H5.6 V63 Q5.6 60 8.6 60 Z" fill="#4f79bd"/>
<rect x="11.6" y="63.6" width="16.4" height="15.6" fill="none" stroke="#c9d8f2" stroke-width="0.9" stroke-dasharray="2.2 1.5"/>
<path d="M17.6 66.2 L17.6 76.6 L20.3 74.1 L22.3 77.9 L23.9 77.1 L22 73.4 L25.7 73.2 Z" fill="#ffffff"/>
<g fill="none" stroke="#e6e6e6" stroke-width="1"><circle cx="20.6" cy="97" r="6.4" stroke-dasharray="7.6 2.4" stroke-dashoffset="3.8" stroke="#f0d9d0"/><path d="M20.6 88.6 V93.6 M20.6 100.4 V105.4 M12.2 97 H17.2 M24 97 H29"/></g>
<rect x="5.6" y="113.6" width="30" height="97.6" rx="3" fill="#232628"/>
<g fill="none" stroke="#ececec" stroke-width="1.1"><path d="M20.6 119.2 V132.8 M13.8 126 H27.4"/></g>
<g fill="#ececec"><path d="M20.6 116.8 L23 120.2 H18.2 Z M20.6 135.2 L23 131.8 H18.2 Z M11.4 126 L14.8 123.6 V128.4 Z M29.8 126 L26.4 123.6 V128.4 Z"/><circle cx="20.6" cy="126" r="1.4"/></g>
<g fill="none" stroke="#ececec" stroke-width="1.2"><path d="M14.6 147.4 A6.6 6.6 0 0 1 25.6 145.2 M26.6 152.8 A6.6 6.6 0 0 1 15.6 155"/></g>
<g fill="#ececec"><path d="M27.6 143.4 L27 147.8 L23.4 145.6 Z M13.6 156.8 L14.2 152.4 L17.8 154.6 Z"/><rect x="18.6" y="148.2" width="4" height="4" transform="rotate(45 20.6 150.2)"/></g>
<rect x="13.4" y="174.4" width="7.6" height="7.6" fill="#ececec"/>
<g fill="none" stroke="#ececec" stroke-width="1"><path d="M13.4 172 V167.4 H28 V182 H23.4 M22.4 173 L26.6 168.8 M23.4 168.8 H26.6 V172"/></g>
<g fill="none" stroke="#ececec" stroke-width="1.1"><circle cx="20.6" cy="199" r="6.6"/></g>
<rect x="17.4" y="195.8" width="6.4" height="6.4" fill="#ececec"/>
<g fill="#ececec"><path d="M20.6 189.8 L22.6 192.4 H18.6 Z M20.6 208.2 L22.6 205.6 H18.6 Z M11.4 199 L14 197 V201 Z M29.8 199 L27.2 197 V201 Z"/></g>
<rect x="5.6" y="215.4" width="30" height="48.6" rx="3" fill="#232628"/>
<g fill="none" stroke="#ececec" stroke-width="1.2" stroke-linecap="round"><path d="M13 229.6 L22.6 220.8 L24.6 222.8 L14.8 231.4 Z" fill="#ececec" stroke="none"/><path d="M13 232.6 C18 234 19 228.6 23 229.4 C26 230 26 233.6 28.6 233.2"/></g>
<g><path d="M14 259.4 V244.4 H15.8 V257.6 H28.4 V259.4 Z" fill="#ececec"/><path d="M16.4 257 V248.6 C22 249.4 25.6 252.6 26.6 257 Z" fill="#7fd9c0"/></g>
<rect x="5.6" y="268" width="30" height="24.4" rx="3" fill="#232628"/>
<g fill="none" stroke="#e6e6e6" stroke-width="1"><path d="M15.6 277.6 H25.6 V288.4 H15.6 Z M15.6 277.6 L18.8 274.6 H28.8 V285.4 L25.6 288.4 M25.6 277.6 L28.8 274.6"/></g>
<path d="M12.6 271.2 V275.6 M10.4 273.4 H14.8" stroke="#9fe6cf" stroke-width="1.1" fill="none"/>
<!-- right header buttons -->
<rect x="1017.5" y="39.2" width="22.5" height="13.8" rx="2.6" fill="#202325"/>
<g fill="#ececec"><path d="M1020.6 45.4 L1027.6 47.4 L1023 52 Z"/></g>
<g fill="none" stroke="#ececec" stroke-width="1"><path d="M1022 44 C1024 41 1028 41 1030 44 C1028 46.4 1024 46.4 1022 44 Z"/></g><circle cx="1026" cy="43.8" r="1.3" fill="#ececec"/>
<path d="M1033.4 45.4 L1035.4 47.4 L1037.4 45.4" fill="none" stroke="#d6d6d6" stroke-width="1"/>
<path d="M1046.3 39.2 H1057.6 V53 H1046.3 Q1043.7 53 1043.7 50.4 V41.8 Q1043.7 39.2 1046.3 39.2 Z" fill="#4f79bd"/>
<path d="M1057.6 39.2 H1068.4 Q1071 39.2 1071 41.8 V50.4 Q1071 53 1068.4 53 H1057.6 Z" fill="#202325"/>
<g fill="none" stroke="#dfe9fb" stroke-width="1"><path d="M1046 50.6 C1050 50 1054 46 1055.4 41.6 M1046 42 C1049.6 42.6 1052.6 45.4 1053.6 50.4"/></g>
<path d="M1062.2 45.4 L1064.2 47.4 L1066.2 45.4" fill="none" stroke="#d6d6d6" stroke-width="1"/>
<path d="M1078.3 39.2 H1090 V53 H1078.3 Q1075.7 53 1075.7 50.4 V41.8 Q1075.7 39.2 1078.3 39.2 Z" fill="#4f79bd"/>
<path d="M1090 39.2 H1100.6 Q1103.2 39.2 1103.2 41.8 V50.4 Q1103.2 53 1100.6 53 H1090 Z" fill="#202325"/>
<circle cx="1084.4" cy="45" r="3.8" fill="#e6eefc"/><circle cx="1081.8" cy="47.8" r="3.4" fill="none" stroke="#dfe9fb" stroke-width="1"/>
<path d="M1094.6 45.4 L1096.6 47.4 L1098.6 45.4" fill="none" stroke="#d6d6d6" stroke-width="1"/>
<rect x="1107.4" y="39.2" width="13.8" height="13.8" rx="2.6" fill="#52595c"/>
<g fill="none" stroke="#e0e0e0" stroke-width="1"><rect x="1110" y="43.6" width="6.6" height="6.6"/><path d="M1112 43.4 V41.6 H1118.8 V48.4 H1116.8"/></g>
<rect x="1125" y="39.2" width="55" height="13.8" rx="2.6" fill="#565d60"/>
<rect x="1138.75" y="39.2" width="13.75" height="13.8" fill="#4f79bd"/>
<path d="M1180 39.2 H1191.4 Q1194 39.2 1194 41.8 V50.4 Q1194 53 1191.4 53 H1180 Z" fill="#202325"/>
<g fill="none" stroke="#dedede" stroke-width="0.9"><circle cx="1131.9" cy="46.1" r="4.4"/><path d="M1127.5 46.1 H1136.3 M1131.9 41.7 V50.5"/><ellipse cx="1131.9" cy="46.1" rx="2" ry="4.4"/></g>
<circle cx="1145.6" cy="46.1" r="4.6" fill="#f4f4f4"/>
<circle cx="1159.4" cy="46.1" r="4.4" fill="none" stroke="#dedede" stroke-width="0.9"/><path d="M1159.4 41.7 A4.4 4.4 0 0 0 1159.4 50.5 Z M1159.4 46.1 H1163.8 A4.4 4.4 0 0 1 1159.4 50.5 Z" fill="#dedede"/>
<circle cx="1173.1" cy="46.1" r="4.4" fill="none" stroke="#dedede" stroke-width="0.9"/><path d="M1170.4 48.8 A3.8 3.8 0 0 0 1175.8 43.4" fill="none" stroke="#dedede" stroke-width="1.6"/>
<path d="M1185 45.4 L1187 47.4 L1189 45.4" fill="none" stroke="#d6d6d6" stroke-width="1"/>
<!-- nav gizmo -->
<path d="M1163.6 91 L1163.6 74" stroke="#3b86e6" stroke-width="1.4"/>
<path d="M1163.6 91 L1152.6 96.2" stroke="#e0384c" stroke-width="1.4"/>
<path d="M1163.6 91 L1177 95.4" stroke="#7bd21f" stroke-width="1.4"/>
<circle cx="1145.6" cy="84.8" r="4.9" fill="#8de8c4" stroke="#7fd49c" stroke-width="0.9"/>
<circle cx="1177.6" cy="83.4" r="4.9" fill="#a7e9fb" stroke="#c99aa6" stroke-width="0.9"/>
<circle cx="1163.6" cy="111.6" r="4.9" fill="#7fd2f4" stroke="#6eb7ea" stroke-width="0.9"/>
<circle cx="1163.6" cy="70.2" r="5.4" fill="#3b86e6"/>
<circle cx="1149.2" cy="97.8" r="5.4" fill="#e8354d"/>
<circle cx="1181" cy="96.4" r="5.4" fill="#7bd21f"/>
<text x="1161.4" y="72.8" style="font-size:6.6px;fill:#0d2f6b;font-weight:bold">Z</text>
<text x="1147" y="100.4" style="font-size:6.6px;fill:#6b0d1c;font-weight:bold">X</text>
<text x="1178.8" y="99" style="font-size:6.6px;fill:#2b5a06;font-weight:bold">Y</text>
<rect x="1194.6" y="64" width="8" height="13" rx="2.5" fill="#7fa6ae"/>
<g fill="#7da6ae"><circle cx="1182.8" cy="129.9" r="9.6"/><circle cx="1182.8" cy="150.9" r="9.6"/><circle cx="1182.8" cy="172.6" r="9.6"/><circle cx="1182.8" cy="193.9" r="9.6"/></g>
<g fill="none" stroke="#e9f6f9" stroke-width="1.2"><circle cx="1184" cy="128.4" r="4"/><path d="M1181 131.6 L1177.6 135.4 M1184 126.4 V130.4 M1182 128.4 H1186"/></g>
<path d="M1178.6 151 L1180.4 149.4 L1181 146.4 L1182.4 146.2 L1182.6 144.4 L1184 144.4 L1184.4 145.2 L1185.8 145.4 L1186 146.8 L1187.2 147 L1187.4 151 L1188.8 149.4 L1189.6 150.2 L1187.2 155 L1186.2 157 H1181.4 L1180.4 154.6 Z" fill="#eef8fa"/>
<g fill="#eef8fa"><rect x="1179.4" y="170" width="7.2" height="5.4" rx="0.8"/><path d="M1186.8 171.6 L1189.4 170 V175.6 L1186.8 174 Z"/><circle cx="1180.8" cy="168" r="1.9"/><circle cx="1184.8" cy="167.6" r="2.3"/><path d="M1180.4 176 H1182 V178.4 H1180.4 Z M1184.6 176 H1186.2 V178.4 H1184.6 Z"/></g>
<g fill="none" stroke="#eef8fa" stroke-width="0.9"><path d="M1179.6 188.4 H1186 L1188.4 199.4 H1177.2 Z M1178.8 192 H1186.8 M1178 195.6 H1187.6 M1181.8 188.4 L1180.8 199.4 M1184 188.4 L1184.8 199.4"/></g>

<!-- ======= top bar ======= -->
<rect x="0" y="0" width="1200" height="19" fill="#222222"/>
<rect x="0" y="19" width="1200" height="17.5" fill="#2e2e2e"/>
<!-- blender logo -->
<g fill="none" stroke="#e6e6e6" stroke-linecap="round">
<circle cx="13.6" cy="10.3" r="3.1" stroke-width="2"/>
<path d="M6.8 12.3 L12.2 7.6 M7.8 7.5 L13 7.5 M10.6 4.8 L13.4 7.2" stroke-width="1.3"/>
</g>
<text x="24.7" y="12" textLength="11.2" lengthAdjust="spacingAndGlyphs">File</text>
<text x="47" y="12" textLength="13.4" lengthAdjust="spacingAndGlyphs">Edit</text>
<text x="71.3" y="12" textLength="25.4" lengthAdjust="spacingAndGlyphs">Render</text>
<text x="107.5" y="12" textLength="28.4" lengthAdjust="spacingAndGlyphs">Window</text>
<text x="146.7" y="12" textLength="15.8" lengthAdjust="spacingAndGlyphs">Help</text>
<!-- back to previous -->
<rect x="180" y="2.5" width="83.5" height="13.2" rx="2.6" fill="#4d4d4d"/>
<g fill="none" stroke="#dcdcdc" stroke-width="0.9">
<rect x="184.6" y="4.6" width="8.6" height="6.3"/>
<path d="M186.4 7.7 H191.4 M188 6.2 L186.4 7.7 L188 9.2 M188.9 11 V13 M186.2 13.2 H191.8"/>
</g>
<text x="198" y="12" textLength="59" lengthAdjust="spacingAndGlyphs">Back to Previous</text>
<!-- scene selector -->
<rect x="918.5" y="3" width="21.5" height="12.6" rx="2.5" fill="#353535"/>
<rect x="938" y="3" width="88" height="12.6" fill="#1b1b1b"/>
<rect x="1026" y="3" width="14" height="12.6" fill="#3a3a3a"/>
<rect x="1040" y="3" width="14" height="12.6" rx="2.5" fill="#303030"/>
<g fill="#e0e0e0"><path d="M922.2 12.5 L924.3 6.2 L926 5 L927.3 7 L926.2 12.5 Z"/><circle cx="927.8" cy="7" r="1.7"/></g>
<circle cx="928.3" cy="11.2" r="2" fill="none" stroke="#e0e0e0" stroke-width="0.9"/>
<path d="M932.6 8.2 L934.6 10.2 L936.6 8.2" fill="none" stroke="#cfcfcf" stroke-width="1"/>
<text x="945" y="12" textLength="22.5" lengthAdjust="spacingAndGlyphs">Scene</text>
<g fill="none" stroke="#c8c8c8" stroke-width="0.9"><path d="M1029.5 6.5 V13 H1035 M1031.2 4.8 H1035.2 L1037.3 6.8 V11.5 H1031.2 Z M1035 4.8 V7 H1037.3"/></g>
<path d="M1045 7 L1049.5 11.8 M1049.5 7 L1045 11.8" stroke="#555" stroke-width="1" fill="none"/>
<!-- view layer selector -->
<rect x="1060" y="3" width="21.5" height="12.6" rx="2.5" fill="#353535"/>
<rect x="1080" y="3" width="87" height="12.6" fill="#1b1b1b"/>
<rect x="1166" y="3" width="14" height="12.6" fill="#3a3a3a"/>
<rect x="1180" y="3" width="14" height="12.6" rx="2.5" fill="#303030"/>
<g fill="none" stroke="#dadada" stroke-width="0.9"><rect x="1065.6" y="4.8" width="6.6" height="5.8"/><path d="M1063.6 6.6 V12.6 H1070.4"/></g>
<path d="M1066 10.2 L1068 7.4 L1069.6 9.2 L1070.6 8.2 L1071.8 10.2 Z" fill="#dadada"/>
<path d="M1074 8.2 L1076 10.2 L1078 8.2" fill="none" stroke="#cfcfcf" stroke-width="1"/>
<text x="1085.5" y="12" textLength="40" lengthAdjust="spacingAndGlyphs">View Layer</text>
<g fill="none" stroke="#c8c8c8" stroke-width="0.9"><path d="M1169.5 6.5 V13 H1175 M1171.2 4.8 H1175.2 L1177.3 6.8 V11.5 H1171.2 Z M1175 4.8 V7 H1177.3"/></g>
<path d="M1185 7 L1189.5 11.8 M1189.5 7 L1185 11.8" stroke="#555" stroke-width="1" fill="none"/>
<!-- ======= tool header ======= -->
<g fill="none" stroke="#dddddd" stroke-width="0.9"><path d="M9 29.5 H16 M10.8 25.6 L12.2 32.6 M8.6 27.4 H11.4"/></g>
<circle cx="16.4" cy="25.4" r="2.4" fill="#e3e3e3"/>
<path d="M15.4 27.4 L15 31.6 L18.8 31.6 L17.6 27.4 Z" fill="#dcdcdc"/>
<path d="M21.6 28.2 L23.4 30 L25.2 28.2" fill="none" stroke="#cfcfcf" stroke-width="1"/>
<rect x="36.6" y="20.6" width="16" height="14.8" fill="#2a2a2a" stroke="#d1a13c" stroke-width="1" stroke-dasharray="2.2 1.4"/>
<path d="M42.2 23.4 L42.2 32.6 L44.6 30.4 L46.4 33.8 L47.8 33.1 L46.1 29.8 L49.4 29.6 Z" fill="#f0f0f0"/>
<rect x="62.5" y="22.4" width="12.2" height="12.6" rx="1.5" fill="#4772b3"/>
<rect x="63.8" y="23.8" width="9.6" height="9.8" fill="#5b86c8" stroke="#a9c3ee" stroke-width="0.8" stroke-dasharray="1.6 1.2"/>
<rect x="76" y="22.4" width="12" height="12.6" rx="1.5" fill="#3b3b3b"/>
<path d="M77.2 25.6 H81.2 V23.6 H86.8 V30.8 H83.6 V33.6 H77.2 Z" fill="#d8d8d8"/>
<rect x="90" y="22.4" width="11.4" height="12.6" rx="1.5" fill="#3b3b3b"/>
<path d="M94 23.6 H100.2 V30 H96.8 V27 H94 Z" fill="#d8d8d8"/>
<rect x="91" y="27" width="5.6" height="6.4" fill="none" stroke="#bdbdbd" stroke-width="0.8" stroke-dasharray="1.4 1.1"/>
<rect x="103" y="22.4" width="12" height="12.6" rx="1.5" fill="#3b3b3b"/>
<path d="M104.2 26.6 H107.2 V23.6 H113.8 V30.2 H110.8 V33.6 H104.2 Z M107.4 26.8 V30 H110.6 V26.8 Z" fill="#d8d8d8" fill-rule="evenodd"/>
<rect x="116.8" y="22.4" width="11.6" height="12.6" rx="1.5" fill="#3b3b3b"/>
<rect x="117.8" y="23.6" width="9.6" height="10" fill="none" stroke="#bdbdbd" stroke-width="0.8" stroke-dasharray="1.4 1.1"/>
<rect x="120.4" y="26.4" width="4.4" height="4.6" fill="#d8d8d8"/>
<!-- transform orientation etc -->
<rect x="511.7" y="22" width="55" height="12.4" rx="2.5" fill="#222222"/>
<g fill="none" stroke="#dcdcdc" stroke-width="0.9"><path d="M516 24.4 V31.6 H523 M516 31.6 L521 26.6"/><path d="M514.8 25.8 L516 24 L517.2 25.8 M521.4 30.4 L523.2 31.6 L521.4 32.8 M519.4 26.4 L521.2 26.4 L521.2 28.2"/></g>
<text x="529.7" y="31" textLength="22.4" lengthAdjust="spacingAndGlyphs">Global</text>
<path d="M560 27.6 L562 29.6 L564 27.6" fill="none" stroke="#cfcfcf" stroke-width="1"/>
<rect x="572.5" y="22" width="20.5" height="12.4" rx="2.5" fill="#262626"/>
<g fill="none" stroke="#dcdcdc" stroke-width="1"><ellipse cx="577.6" cy="29.6" rx="2.6" ry="2" transform="rotate(-40 577.6 29.6)"/><ellipse cx="580.8" cy="26.8" rx="2.6" ry="2" transform="rotate(-40 580.8 26.8)"/></g>
<path d="M586 27.6 L588 29.6 L590 27.6" fill="none" stroke="#cfcfcf" stroke-width="1"/>
<rect x="598" y="22" width="13" height="12.4" rx="2.5" fill="#555555"/>
<path d="M600.6 31 C600 26 603 24 606.4 25.4 C609.2 26.6 608.6 29.6 606 30.2 M602.8 30.6 C602.6 27.6 604.4 26.6 606 27.4" fill="none" stroke="#8a8a8a" stroke-width="1.3"/>
<rect x="611" y="22" width="23" height="12.4" rx="2.5" fill="#262626"/>
<g fill="#e6e6e6"><rect x="613.6" y="23.8" width="3.6" height="3.6"/><rect x="619.6" y="23.8" width="3.6" height="3.6"/><rect x="613.6" y="29.2" width="3.6" height="3.6"/><rect x="619.6" y="29.2" width="3.6" height="3.6"/></g>
<path d="M627 27.6 L629 29.6 L631 27.6" fill="none" stroke="#cfcfcf" stroke-width="1"/>
<rect x="638" y="22" width="13.2" height="12.4" rx="2.5" fill="#4f4f4f"/>
<circle cx="644.6" cy="28.2" r="3.4" fill="none" stroke="#6a6a6a" stroke-width="1"/><circle cx="644.6" cy="28.2" r="1.3" fill="#d0d0d0"/>
<rect x="651.2" y="22" width="23" height="12.4" rx="2.5" fill="#333333"/>
<path d="M654 32 C658 32 657.6 24.4 659.6 24.4 C661.6 24.4 661.2 32 665.2 32" fill="none" stroke="#777" stroke-width="1"/>
<!-- options -->
<rect x="1150" y="21.4" width="44" height="12.8" rx="2.5" fill="#292929"/>
<text x="1155" y="31" textLength="27.5" lengthAdjust="spacingAndGlyphs">Options</text>
<path d="M1186.4 27.4 L1188.6 29.6 L1190.8 27.4" fill="none" stroke="#cfcfcf" stroke-width="1"/>
<!-- ======= status bar ======= -->
<rect x="0" y="672" width="1200" height="15" fill="#232323"/>
<rect x="0" y="36.5" width="1.2" height="635.5" fill="#2c4a55"/>
<g fill="none" stroke="#b8b8b8" stroke-width="0.9">
<rect x="8.2" y="675.6" width="5.6" height="8.6" rx="2.2"/><path d="M8.2 679.4 H11 V675.6" />
<rect x="54.6" y="675.6" width="5.6" height="8.6" rx="2.2"/><path d="M54.6 679.4 H57.4 V675.6"/><path d="M61.6 675.2 C63 676 63 677.6 62.2 678.4"/>
<rect x="164.2" y="675.6" width="5.6" height="8.6" rx="2.2"/><path d="M167 675.6 V679"/>
<rect x="320.2" y="675.6" width="5.6" height="8.6" rx="2.2"/><path d="M325.8 679.4 H323 V675.6"/>
</g>
<rect x="8.6" y="676" width="2.4" height="3.2" fill="#b8b8b8"/><rect x="55" y="676" width="2.4" height="3.2" fill="#b8b8b8"/><rect x="323.2" y="676" width="2.4" height="3.2" fill="#b8b8b8"/>
<g style="fill:#a8a8a8">
<text x="24.5" y="683" textLength="21.5" lengthAdjust="spacingAndGlyphs" style="fill:#a8a8a8">Select</text>
<text x="71" y="683" textLength="38.5" lengthAdjust="spacingAndGlyphs" style="fill:#a8a8a8">Box Select</text>
<text x="179.5" y="683" textLength="43.5" lengthAdjust="spacingAndGlyphs" style="fill:#a8a8a8">Rotate View</text>
<text x="334.5" y="683" textLength="76.5" lengthAdjust="spacingAndGlyphs" style="fill:#a8a8a8">Object Context Menu</text>
<text x="876.5" y="683" textLength="316" lengthAdjust="spacingAndGlyphs" style="fill:#a8a8a8">Scene Collection | SIZE | Verts:26,329 | Faces:24,224 | Tris:50,332 | Objects:0/70 | 2.93.6</text>
</g>

</svg>
</body></html>
